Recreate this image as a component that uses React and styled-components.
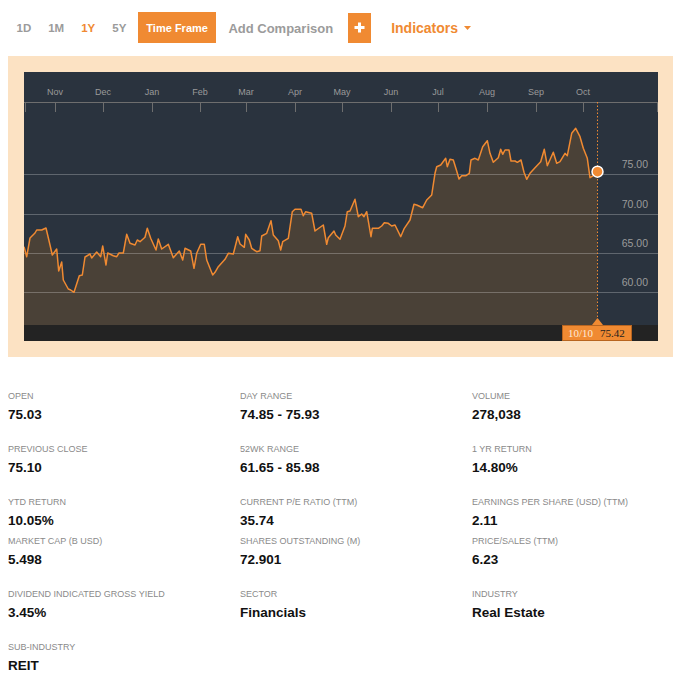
import React from 'react';
import styled, { createGlobalStyle } from 'styled-components';

const ORANGE = '#f08a32';

const GlobalStyle = createGlobalStyle`
  html {
    overflow: hidden;
  }
  body {
    margin: 8px 0 0 8px;
    background: #fff;
    font-family: "Liberation Sans", Arial, Helvetica, sans-serif;
  }
`;

const Toolbar = styled.div`
  display: flex;
  align-items: center;
  height: 31px;
  padding-top: 4px;
`;

const RangeButton = styled.span`
  padding: 0 8.5px;
  font-size: 11.5px;
  font-weight: bold;
  color: ${(p) => (p.$active ? ORANGE : '#9b9b9b')};
  cursor: pointer;
`;

const TimeFrame = styled.div`
  margin-left: 3px;
  height: 31px;
  padding: 0 8.5px;
  display: flex;
  align-items: center;
  background: ${ORANGE};
  color: #fff;
  font-size: 11px;
  font-weight: bold;
`;

const AddComparison = styled.span`
  margin-left: 12px;
  padding-top: 2px;
  font-size: 13px;
  font-weight: bold;
  color: #9b9b9b;
`;

const PlusButton = styled.div`
  margin-left: 15px;
  width: 23px;
  height: 30px;
  display: flex;
  align-items: center;
  justify-content: center;
  background: ${ORANGE};
`;

const Indicators = styled.div`
  margin-left: 20px;
  display: flex;
  align-items: center;
  gap: 6px;
  font-size: 14px;
  font-weight: bold;
  color: ${ORANGE};
`;

const ChartFrame = styled.div`
  margin-top: 13px;
  padding: 16px;
  background: #fce2c3;
`;

const ChartPanel = styled.div`
  width: 634px;
  height: 269px;
  background: #2a333e;
  svg {
    display: block;
  }
`;

const StatGrid = styled.div`
  display: grid;
  grid-template-columns: repeat(3, 232px);
  row-gap: 20px;
  margin-top: ${(p) => p.$top}px;
`;

const StatLabel = styled.div`
  font-size: 9px;
  line-height: 12px;
  color: #8a8a8a;
  text-transform: uppercase;
  margin-bottom: 5px;
`;

const StatValue = styled.div`
  font-size: 13.5px;
  line-height: 16px;
  font-weight: bold;
  color: #111;
`;

const months = [
  ['Nov', 31], ['Dec', 79], ['Jan', 128], ['Feb', 176], ['Mar', 222], ['Apr', 271],
  ['May', 318], ['Jun', 367], ['Jul', 414], ['Aug', 463], ['Sep', 512], ['Oct', 559],
];
const ticks = [1, 31, 79, 128, 176, 222, 271, 318, 367, 414, 463, 512, 559, 633];
const grid = [
  ['75.00', 102], ['70.00', 142], ['65.00', 181], ['60.00', 220],
];

// price trace, page coordinates of the reference
const trace = [
  [24, 246.7], [26.7, 256.7], [30, 238], [35, 233], [36.7, 230], [41.7, 230], [46, 228], [50, 245],
  [52.3, 255], [56.7, 249], [58.7, 271], [61.7, 262], [63.3, 280], [68.3, 289], [70.7, 290], [74, 292.3],
  [79.3, 275.7], [82.3, 275], [85, 257], [90, 254], [91.7, 258], [96.7, 252], [100.7, 256.7], [102.7, 246],
  [106, 265], [107.7, 253], [113.3, 255.7], [116.7, 256.7], [119, 253], [123.3, 253], [126.7, 234.3],
  [130, 243.3], [135, 245], [137.3, 240], [140, 241.7], [145, 237.3], [147.3, 228.3], [150.7, 238.3],
  [156, 250], [158.3, 239], [161.7, 249], [168.3, 244.3], [173.3, 257.7], [179.3, 251], [182.7, 260],
  [185, 248.3], [190.7, 251], [194, 268.3], [196.7, 253.3], [200.7, 244.3], [204.3, 244.3], [206.7, 260],
  [212.7, 275], [215, 272.3], [218.3, 266.7], [225, 259.3], [228.3, 253.3], [233.3, 254], [237.7, 236.7],
  [240, 244], [244.3, 247.3], [245.7, 234.3], [249.3, 240], [251.7, 248.3], [256.7, 251.7], [260, 250.7],
  [261.7, 236], [266.7, 233.3], [271, 220.7], [273.3, 235], [278.3, 240.7], [280.7, 250], [282.7, 241.7],
  [288.3, 238.3], [292.3, 211.7], [295, 209.3], [301, 209.3], [303.3, 215.7], [305.7, 211.7], [311.7, 213.3],
  [315, 231], [317.7, 229], [323.3, 225], [326.7, 244.3], [328.3, 237.7], [334, 231], [335.7, 235],
  [340, 239.3], [345, 226], [347.3, 211.7], [350, 211], [355, 199.3], [358.3, 216.7], [361.7, 214],
  [364, 216.7], [366.7, 211.7], [371, 236.7], [372.3, 228.3], [378.3, 228.3], [381.7, 226], [384.3, 222.7],
  [388.3, 223.3], [391.7, 226], [395, 225], [400.7, 236.7], [404.3, 228.3], [410, 220], [414, 204.3],
  [416.7, 205], [422.7, 207.7], [426.7, 200], [431.7, 195], [435, 173.3], [436.7, 166.7], [440.7, 165],
  [445.7, 158.3], [447.3, 166.7], [450, 159.3], [453.3, 160], [456.7, 171], [459, 179], [461.7, 175.7],
  [466, 175.7], [469.3, 173.3], [471, 160], [475, 158.3], [478.3, 160], [482.7, 146.7], [487.3, 140.7],
  [490, 153.3], [493.3, 162.3], [498.3, 157.7], [500.7, 149.3], [502.7, 154.3], [505, 150], [509, 150],
  [511, 161], [515, 161], [517.3, 162.3], [521, 160], [524, 172.3], [526.7, 179.3], [530, 173.3],
  [535, 167.7], [540.7, 161.7], [544.3, 149.3], [547.3, 165.7], [553.3, 152.3], [556.7, 163.3],
  [560, 161.7], [565, 153.3], [567.3, 155.7], [571.7, 133.3], [575.7, 128.3], [580, 136.7], [583.3, 148.3],
  [587.3, 158.3], [590, 177.7], [592.7, 176], [597.3, 171.7],
];

const PLOT_BOTTOM = 253;
const NOW_X = 573;

const Chart = () => {
  const pts = trace.map(([x, y]) => [x - 24, y - 72]);
  const line = pts.map(([x, y], i) => `${i ? 'L' : 'M'}${x.toFixed(1)},${y.toFixed(1)}`).join(' ');
  const last = pts[pts.length - 1];
  const area = `${line} L${last[0]},${PLOT_BOTTOM} L${pts[0][0]},${PLOT_BOTTOM} Z`;

  return (
    <svg width="634" height="269" viewBox="0 0 634 269">
      {months.map(([m, x]) => (
        <text key={m} x={x} y="22.5" textAnchor="middle" fontSize="9" fill="#9a9a9a"
          fontFamily="Liberation Sans, Arial, sans-serif">{m}</text>
      ))}
      <line x1="0" x2="634" y1="30.5" y2="30.5" stroke="#6e6e6e" />
      {ticks.map((x) => (
        <line key={x} x1={x + 0.5} x2={x + 0.5} y1="30" y2="40" stroke="#6e6e6e" />
      ))}
      <path d={area} fill="#4a4137" />
      {grid.map(([label, y]) => (
        <g key={label}>
          <line x1="0" x2="634" y1={y + 0.5} y2={y + 0.5} stroke="rgba(255,255,255,0.25)" />
          <text x="624" y={y - 6} textAnchor="end" fontSize="10.5" fill="#9b9b9b"
            fontFamily="Liberation Sans, Arial, sans-serif">{label}</text>
        </g>
      ))}
      <line x1={NOW_X + 0.5} x2={NOW_X + 0.5} y1="30" y2={PLOT_BOTTOM} stroke={ORANGE}
        strokeWidth="1" strokeDasharray="1.5 2" />
      <path d={line} fill="none" stroke={ORANGE} strokeWidth="1.5" strokeLinejoin="round" />
      <rect x="0" y={PLOT_BOTTOM} width="634" height="16" fill="#232323" />
      <path d={`M${NOW_X - 5},${PLOT_BOTTOM} L${NOW_X + 0.5},246 L${NOW_X + 6},${PLOT_BOTTOM} Z`} fill={ORANGE} />
      <rect x="538.5" y={PLOT_BOTTOM + 0.5} width="69" height="15" fill={ORANGE} stroke="#b86520" />
      <text x="544" y="265" fontSize="11" fill="#fde9d6" fontFamily="Liberation Serif, Times New Roman, serif">10/10</text>
      <text x="576" y="265" fontSize="11" fill="#1e1e1e" fontFamily="Liberation Serif, Times New Roman, serif">75.42</text>
      <circle cx={NOW_X + 0.5} cy={last[1]} r="5.5" fill={ORANGE} stroke="#fff" strokeWidth="1.5" />
    </svg>
  );
};

const statsTop = [
  ['Open', '75.03'],
  ['Day Range', '74.85 - 75.93'],
  ['Volume', '278,038'],
  ['Previous Close', '75.10'],
  ['52wk Range', '61.65 - 85.98'],
  ['1 Yr Return', '14.80%'],
  ['YTD Return', '10.05%'],
  ['Current P/E Ratio (TTM)', '35.74'],
  ['Earnings per Share (USD) (TTM)', '2.11'],
];

const statsBottom = [
  ['Market Cap (B USD)', '5.498'],
  ['Shares Outstanding (M)', '72.901'],
  ['Price/Sales (TTM)', '6.23'],
  ['Dividend Indicated Gross Yield', '3.45%'],
  ['Sector', 'Financials'],
  ['Industry', 'Real Estate'],
  ['Sub-Industry', 'REIT'],
];

const Stats = ({ items, top }) => (
  <StatGrid $top={top}>
    {items.map(([label, value]) => (
      <div key={label}>
        <StatLabel>{label}</StatLabel>
        <StatValue>{value}</StatValue>
      </div>
    ))}
  </StatGrid>
);

const App = () => (
  <>
    <GlobalStyle />
    <Toolbar>
      <RangeButton>1D</RangeButton>
      <RangeButton>1M</RangeButton>
      <RangeButton $active>1Y</RangeButton>
      <RangeButton>5Y</RangeButton>
      <TimeFrame>Time Frame</TimeFrame>
      <AddComparison>Add Comparison</AddComparison>
      <PlusButton>
        <svg width="11" height="11" viewBox="0 0 11 11">
          <path d="M5.5 0.5v10M0.5 5.5h10" stroke="#fff" strokeWidth="3" />
        </svg>
      </PlusButton>
      <Indicators>
        Indicators
        <svg width="7" height="4" viewBox="0 0 7 4">
          <path d="M0 0h7L3.5 4z" fill={ORANGE} />
        </svg>
      </Indicators>
    </Toolbar>
    <ChartFrame>
      <ChartPanel>
        <Chart />
      </ChartPanel>
    </ChartFrame>
    <Stats items={statsTop} top={33} />
    <Stats items={statsBottom} top={6} />
  </>
);

export default App;
